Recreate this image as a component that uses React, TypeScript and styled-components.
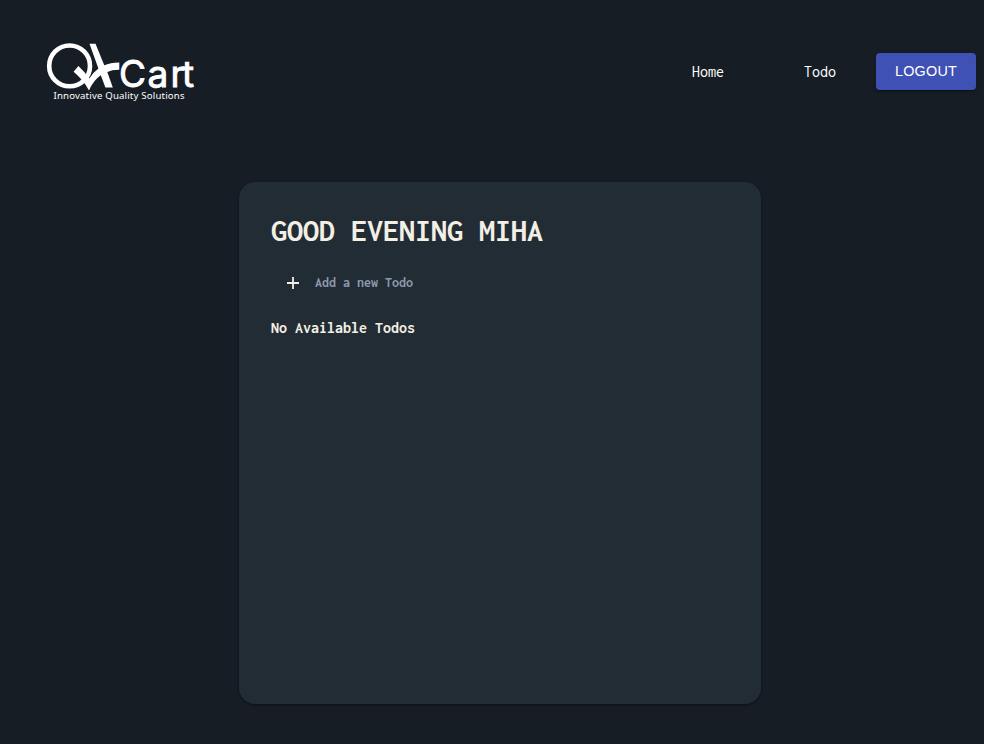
import React from 'react';
import styled, { createGlobalStyle } from 'styled-components';

const mono = `"Inconsolata", "Noto Sans Mono CJK SC", "Liberation Mono", monospace`;

const GlobalStyle = createGlobalStyle`
  * { box-sizing: border-box; }
  body { margin: 0; background: #171d25; font-family: ${mono}; overflow: hidden; }
`;

const Page = styled.div`
  min-height: 744px;
  background: #171d25;
`;

const Header = styled.header`
  display: flex;
  align-items: center;
  height: 142px;
  padding: 0 8px 0 40px;
`;

const Logo = styled.svg`
  display: block;
  width: 162px;
  height: 72px;
`;

const Wordmark = styled.text`
  fill: #fff;
  stroke: #fff;
  stroke-width: 0.9px;
  font-family: Inter, Lato, sans-serif;
  font-size: 37px;
  font-weight: 400;
`;

const Tagline = styled.text`
  fill: #fff;
  font-family: "Noto Sans", sans-serif;
  font-size: 9.6px;
`;

const Nav = styled.nav`
  display: flex;
  align-items: center;
  margin-left: auto;
`;

const NavLink = styled.a`
  width: 32px;
  margin: 2px 80px 0 0;
  color: #fff;
  font-size: 16px;
  line-height: 24px;
  text-decoration: none;
  &:nth-child(2) { margin-right: 40px; }
`;

const LogoutButton = styled.button`
  width: 100px;
  height: 37px;
  padding: 0;
  border: 0;
  border-radius: 4px;
  background: #3f51b5;
  color: #fff;
  font: 400 14.4px/36px "Liberation Sans", Arial, sans-serif;
  letter-spacing: 0.2px;
  box-shadow: 0 3px 1px -2px rgba(0, 0, 0, 0.2), 0 2px 2px rgba(0, 0, 0, 0.14),
    0 1px 5px rgba(0, 0, 0, 0.12);
`;

const Card = styled.main`
  width: 522px;
  height: 522px;
  margin: 40px 0 0 239px;
  padding: 32px;
  border-radius: 16px;
  background: #222c35;
  box-shadow: 0 1px 3px rgba(0, 0, 0, 0.28), 0 1px 2px rgba(0, 0, 0, 0.18);
`;

const Greeting = styled.h1`
  margin: 0;
  color: #f3efe4;
  font-size: 32px;
  font-weight: 700;
  line-height: 34px;
  white-space: nowrap;
`;

const AddRow = styled.div`
  display: flex;
  align-items: center;
  gap: 16px;
  height: 38px;
  margin-top: 16px;
  padding-left: 16px;
`;

const Placeholder = styled.span`
  color: #8c98ad;
  font-size: 14px;
  font-weight: 700;
  line-height: 20px;
`;

const EmptyMessage = styled.p`
  margin: 16px 0 0;
  color: #f3efe4;
  font-size: 16px;
  font-weight: 700;
  line-height: 20px;
`;

function QkartLogo() {
  return (
    <Logo viewBox="40 35 162 72" role="img" aria-label="QKCart">
      <circle cx="69.6" cy="65.9" r="20.4" fill="none" stroke="#fff" strokeWidth="4.6" />
      <path
        d="M89.5 43.8H95.5L104.3 65.2Q110 62.8 119.3 62.5V69.7Q112 69.6 107.3 71.9L112.8 87.6H105.4L100.8 75.3Q93.5 80.2 89 90.4Q83.5 80.2 73.6 71.8L78.4 66Q85 72 89.3 78.6Q93 72.6 98.4 68.6Z"
        fill="#fff"
      />
      <Wordmark x="119 147.5 170.5 182" y="87">Cart</Wordmark>
      <Tagline x="53.5" y="98.8" textLength="131" lengthAdjust="spacing">Innovative Quality Solutions</Tagline>
    </Logo>
  );
}

export default function App() {
  return (
    <Page>
      <GlobalStyle />
      <Header>
        <QkartLogo />
        <Nav>
          <NavLink>Home</NavLink>
          <NavLink>Todo</NavLink>
          <LogoutButton>LOGOUT</LogoutButton>
        </Nav>
      </Header>
      <Card>
        <Greeting>GOOD EVENING MIHA</Greeting>
        <AddRow>
          <svg width="12" height="12" viewBox="0 0 12 12">
            <path d="M6 0V12M0 6H12" stroke="#f3efe4" strokeWidth="1.8" />
          </svg>
          <Placeholder>Add a new Todo</Placeholder>
        </AddRow>
        <EmptyMessage>No Available Todos</EmptyMessage>
      </Card>
    </Page>
  );
}
